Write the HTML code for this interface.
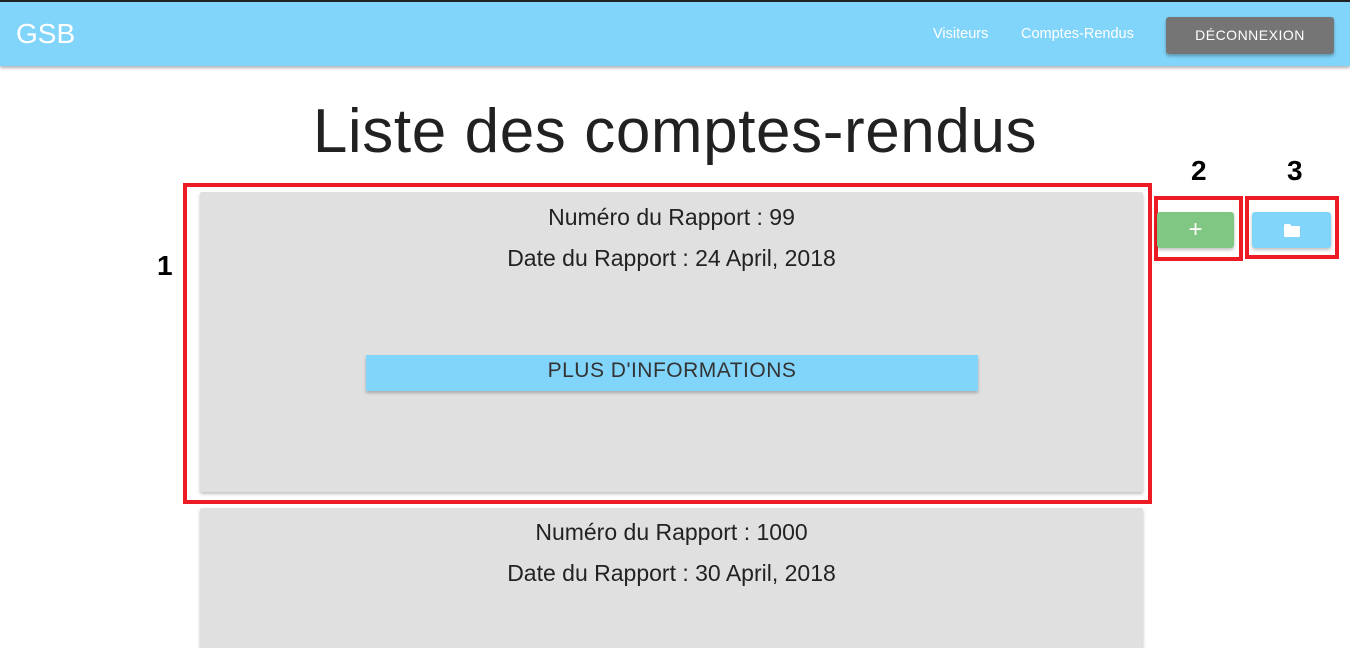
<!DOCTYPE html>
<html><head><meta charset="utf-8"><style>
*{box-sizing:border-box;margin:0;padding:0}
body{width:1350px;height:633px;overflow:hidden;background:#fff;font-family:"Liberation Sans",sans-serif;position:relative}
.top{position:absolute;left:0;top:0;width:1350px;height:2px;background:#222}
.nav{position:absolute;left:0;top:2px;width:1350px;height:64px;background:#81d4fa;box-shadow:0 2px 3px rgba(0,0,0,.3)}
.logo{position:absolute;left:16px;top:16px;color:#fff;font-size:28px}
.nl{position:absolute;top:24px;color:#fff;font-size:14.5px}
.dec{position:absolute;left:1166px;top:15px;width:168px;height:37px;background:#757575;border-radius:3px;color:#fff;font-size:14px;text-align:center;line-height:37px;letter-spacing:.5px;box-shadow:0 2px 3px rgba(0,0,0,.3)}
h1{position:absolute;left:0;width:1350px;top:96px;text-align:center;font-weight:300;font-size:62px;letter-spacing:.6px;color:#212121}
.card{position:absolute;left:200px;width:943px;background:#e0e0e0;border-radius:2px;box-shadow:0 2px 3px rgba(0,0,0,.25);text-align:center;font-size:23px;color:#222}
.card p{height:41px;line-height:41px}
.more{position:absolute;left:166px;top:163px;width:612px;height:36px;background:#81d4fa;font-size:21px;line-height:32px;color:#333;box-shadow:0 2px 3px rgba(0,0,0,.25);letter-spacing:.5px}
.red{position:absolute;border:4px solid #ed1c24}
.num{position:absolute;font-weight:bold;font-size:28px;color:#000}
.btn{position:absolute;top:212px;height:36px;border-radius:3px;box-shadow:0 2px 3px rgba(0,0,0,.25);color:#fff;text-align:center}
</style></head><body>
<div class="top"></div>
<div class="nav">
<div class="logo">GSB</div>
<div class="nl" style="left:933px">Visiteurs</div>
<div class="nl" style="left:1021px">Comptes-Rendus</div>
<div class="dec">DÉCONNEXION</div>
</div>
<h1>Liste des comptes-rendus</h1>
<div class="card" style="top:192px;height:300px;padding-top:5px">
<p>Numéro du Rapport : 99</p><p>Date du Rapport : 24 April, 2018</p>
<div class="more">PLUS D'INFORMATIONS</div>
</div>
<div class="card" style="top:508px;height:140px;padding-top:4px">
<p>Numéro du Rapport : 1000</p><p>Date du Rapport : 30 April, 2018</p>
</div>
<div class="red" style="left:183px;top:183px;width:969px;height:321px"></div>
<div class="red" style="left:1154px;top:196px;width:89px;height:65px"></div>
<div class="red" style="left:1245px;top:196px;width:94px;height:63px"></div>
<div class="num" style="left:157px;top:250px">1</div>
<div class="num" style="left:1191px;top:155px">2</div>
<div class="num" style="left:1287px;top:155px">3</div>
<div class="btn" style="left:1157px;width:77px;background:#81c784;font-size:24px;line-height:36px">+</div>
<div class="btn" style="left:1252px;width:79px;background:#81d4fa">
<svg width="16" height="13" viewBox="0 0 16 13" style="margin-top:12px"><path d="M0 1.5Q0 0 1.5 0H6L7.5 2H14.5Q16 2 16 3.5V11.5Q16 13 14.5 13H1.5Q0 13 0 11.5Z" fill="#fff"/></svg>
</div>
</body></html>
